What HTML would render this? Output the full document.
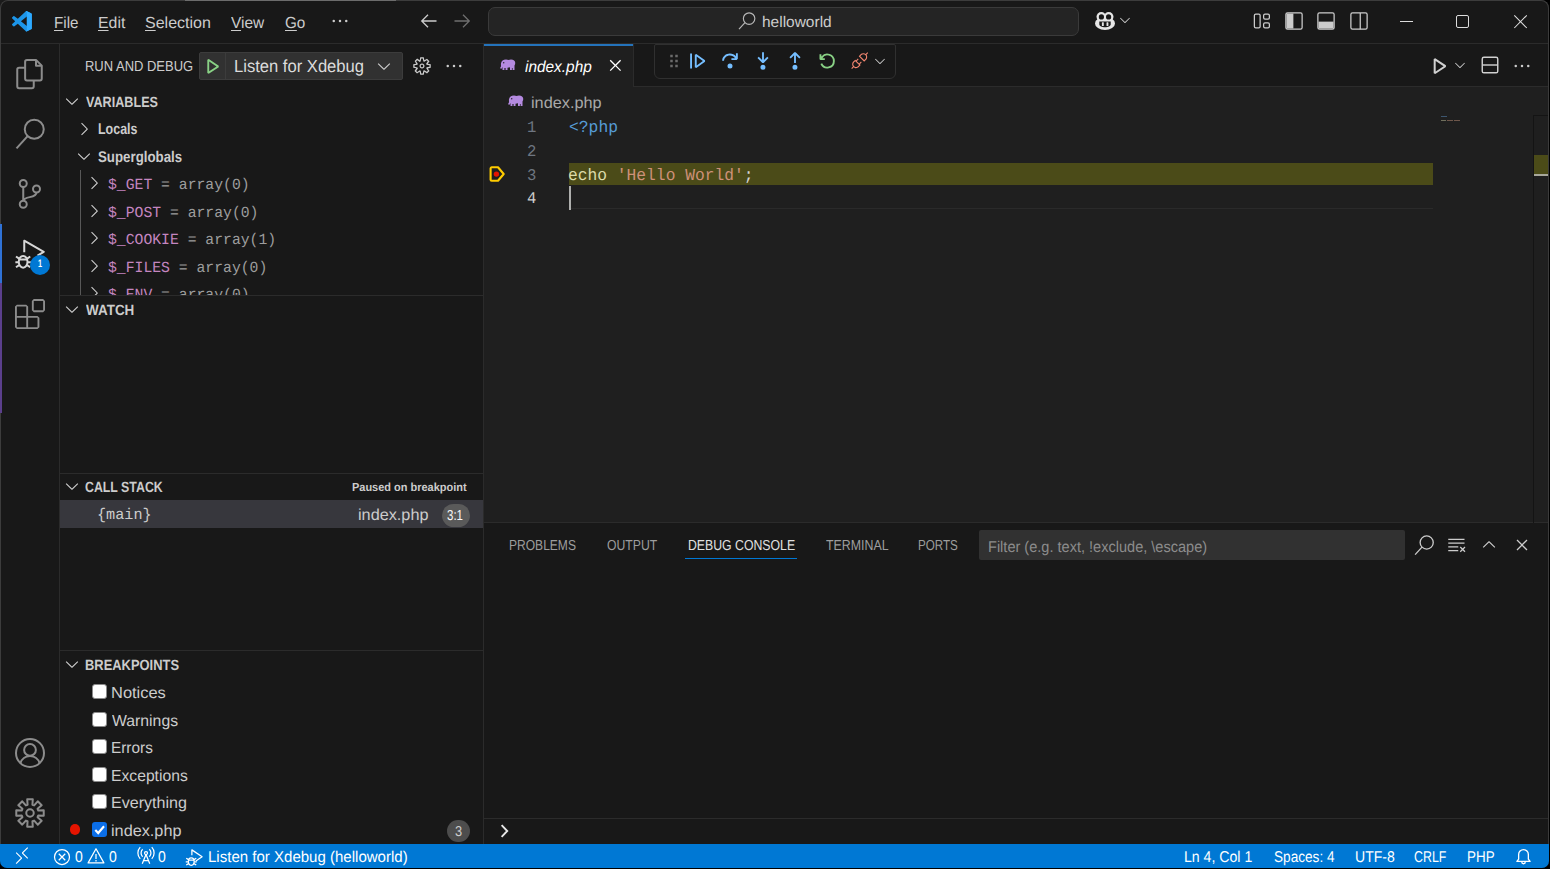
<!DOCTYPE html><html><head><meta charset="utf-8"><title>index.php - helloworld - Visual Studio Code</title><style>
html,body{margin:0;padding:0;background:#000;}
body{width:1550px;height:869px;overflow:hidden;position:relative;font-family:'Liberation Sans',sans-serif;}
#win{position:absolute;left:0;top:0;width:1549px;height:868px;background:#181818;border-radius:8px 8px 7px 7px;overflow:hidden;}
#w{position:absolute;left:0;top:0;width:1550px;height:869px;}
.b{position:absolute;box-sizing:border-box;}
.t{position:absolute;white-space:pre;line-height:1;text-rendering:geometricPrecision;transform-origin:0 0;}
.i{position:absolute;overflow:visible;}
u{text-decoration-thickness:1px;text-underline-offset:2px;}
</style></head><body><div class="b" style="left:0;top:0;width:9px;height:9px;background:#1b1b1b"></div><div id="win"><div id="w"><div class="b" style="left:0px;top:0px;width:1550px;height:44px;background:#181818;"></div><div class="b" style="left:0px;top:43px;width:1550px;height:1px;background:#2b2b2b;"></div><div class="b" style="left:0px;top:44px;width:60px;height:800px;background:#181818;"></div><div class="b" style="left:59px;top:44px;width:1px;height:800px;background:#2b2b2b;"></div><div class="b" style="left:60px;top:44px;width:424px;height:800px;background:#181818;"></div><div class="b" style="left:483px;top:44px;width:1px;height:800px;background:#2b2b2b;"></div><div class="b" style="left:484px;top:44px;width:1066px;height:43px;background:#181818;"></div><div class="b" style="left:484px;top:86px;width:1066px;height:1px;background:#2b2b2b;"></div><div class="b" style="left:484px;top:87px;width:1066px;height:436px;background:#1f1f1f;"></div><div class="b" style="left:484px;top:522px;width:1066px;height:1px;background:#2b2b2b;"></div><div class="b" style="left:484px;top:523px;width:1066px;height:321px;background:#181818;"></div><div class="b" style="left:0px;top:843.5px;width:1550px;height:26px;background:#0078d4;"></div><svg class="i" style="left:11.7px;top:10.5px" width="19.800" height="20.500" viewBox="0 0 100 100" preserveAspectRatio="none"><path d="M70.900 99.300a6.200 6.200 0 0 0 4.960-.19l20.590-9.910A6.250 6.250 0 0 0 100 83.590V16.410a6.250 6.250 0 0 0-3.540-5.630L75.870.870a6.230 6.230 0 0 0-7.100 1.210L29.360 38.040 12.190 25.010a4.160 4.160 0 0 0-5.320.24L1.360 30.260a4.170 4.170 0 0 0 0 6.160L16.250 50 1.360 63.580a4.170 4.170 0 0 0 0 6.160l5.510 5.010a4.160 4.160 0 0 0 5.320.24l17.170-13.030 39.420 35.960a6.200 6.200 0 0 0 2.120 1.380zM75 27.300L45.110 50 75 72.700z" fill="#1c95e8" fill-rule="evenodd"/><path d="M75.870.870a6.230 6.230 0 0 0-5 0 6.200 6.200 0 0 0-2.100 1.200l6.200 4.500v86.800l-6.200 4.500a6.200 6.200 0 0 0 7.090 1.240l20.590-9.910A6.250 6.250 0 0 0 100 83.590V16.410a6.250 6.250 0 0 0-3.540-5.630z" fill="#2eaaff"/><path d="M1.360 30.260l5.510-5.010a4.160 4.160 0 0 1 5.320-.24l63.680 48.300v25.800a6.200 6.200 0 0 1-7.100-1.210L1.360 36.420a4.170 4.170 0 0 1 0-6.160z" fill="#0065a9" opacity=".0"/></svg><span class="t" style="left:53.66px;top:16.02px;font-size:16.0px;color:#cccccc;transform:scaleX(0.9471);"><u>F</u>ile</span><span class="t" style="left:97.60px;top:16.02px;font-size:16.0px;color:#cccccc;transform:scaleX(0.9905);"><u>E</u>dit</span><span class="t" style="left:145.27px;top:16.02px;font-size:16.0px;color:#cccccc;transform:scaleX(1.0021);"><u>S</u>election</span><span class="t" style="left:231.03px;top:16.02px;font-size:16.0px;color:#cccccc;transform:scaleX(0.9663);"><u>V</u>iew</span><span class="t" style="left:285.03px;top:16.02px;font-size:16.0px;color:#cccccc;transform:scaleX(0.9513);"><u>G</u>o</span><svg class="i" style="left:329.5px;top:10.5px;color:#ccc;" width="20" height="20" viewBox="0 0 16 16"><path fill="currentColor" d="M4 8a1 1 0 1 1-2 0 1 1 0 0 1 2 0zm5 0a1 1 0 1 1-2 0 1 1 0 0 1 2 0zm5 0a1 1 0 1 1-2 0 1 1 0 0 1 2 0z"/></svg><svg class="i" style="left:418.8px;top:11.2px;color:#ccc;" width="20" height="20" viewBox="0 0 16 16"><g fill="none" stroke="currentColor" stroke-width="1.05"><path d="M14 8H2.2M7.2 3L2.2 8l5 5"/></g></svg><svg class="i" style="left:451.8px;top:11.2px;color:#6f6f6f;" width="20" height="20" viewBox="0 0 16 16"><g fill="none" stroke="currentColor" stroke-width="1.05"><path d="M2 8h11.8M8.8 3l5 5-5 5"/></g></svg><div class="b" style="left:488px;top:7px;width:591px;height:29px;background:#242424;border:1px solid #3a3a3a;border-radius:7px;"></div><svg class="i" style="left:738.3px;top:11.8px;color:#b8b8b8;" width="17.5" height="17.5" viewBox="0 0 16 16"><g fill="none" stroke="currentColor" stroke-width="1.05"><circle cx="10.150" cy="6" r="5.250"/><path d="M6.400 9.700L0.900 15.700"/></g></svg><span class="t" style="left:762.13px;top:15.02px;font-size:15.4px;color:#cccccc;transform:scaleX(1.0054);">helloworld</span><svg class="i" style="left:1095px;top:11.8px" width="20" height="18" viewBox="0 0 20 18"><ellipse cx="10" cy="11.400" rx="10" ry="6.600" fill="#e6e6e6"/><circle cx="6.300" cy="4.800" r="4.800" fill="#e6e6e6"/><circle cx="13.700" cy="4.800" r="4.800" fill="#e6e6e6"/><circle cx="6.400" cy="4.900" r="2.600" fill="#181818"/><circle cx="13.600" cy="4.900" r="2.600" fill="#181818"/><path fill="#181818" d="M4.300 9.400h11.400v3.200c0 1.500-2.700 2.700-5.700 2.700s-5.700-1.200-5.700-2.700z"/><rect x="6.900" y="10.300" width="1.900" height="3.800" rx=".5" fill="#e6e6e6"/><rect x="11.500" y="10.300" width="1.900" height="3.800" rx=".5" fill="#e6e6e6"/></svg><svg class="i" style="left:1115.1px;top:10.1px;color:#ccc;transform:scale(.8);" width="20" height="20" viewBox="0 0 16 16"><path fill="currentColor" d="M7.976 10.072l4.357-4.357.62.618L8.284 11h-.618L3 6.333l.619-.618 4.357 4.357z"/></svg><svg class="i" style="left:1252px;top:11px;color:#ccc;" width="20" height="20" viewBox="0 0 16 16"><g fill="none" stroke="currentColor" stroke-width="1"><rect x="1.900" y="2.500" width="4.600" height="11" rx="1.100"/><rect x="9.300" y="2.500" width="4.600" height="4" rx="1.100"/><rect x="9.300" y="9.500" width="4.600" height="4" rx="1.100"/></g></svg><svg class="i" style="left:1284px;top:11px;color:#ccc;" width="20" height="20" viewBox="0 0 16 16"><rect x="1.5" y="1.5" width="13" height="13" rx="1.3" fill="none" stroke="currentColor"/><path fill="currentColor" d="M2 2h5.5v12H2z"/></svg><svg class="i" style="left:1316.3px;top:11px;color:#ccc;" width="20" height="20" viewBox="0 0 16 16"><rect x="1.5" y="1.5" width="13" height="13" rx="1.3" fill="none" stroke="currentColor"/><path fill="currentColor" d="M2 8.5h12V14H2z"/></svg><svg class="i" style="left:1349px;top:11px;color:#ccc;" width="20" height="20" viewBox="0 0 16 16"><g fill="none" stroke="currentColor" stroke-width="1"><rect x="1.5" y="1.5" width="13" height="13" rx="1.3"/><path d="M9 1.500v13"/></g></svg><div class="b" style="left:1400px;top:21px;width:13.2px;height:1px;background:#dcdcdc;"></div><div class="b" style="left:1456px;top:15px;width:13.2px;height:13.2px;border:1px solid #dcdcdc;border-radius:2px;"></div><svg class="i" style="left:1510px;top:11px" width="22" height="22" viewBox="0 0 22 22"><path d="M4.300 4.300l12.500 12.700M16.800 4.300L4.300 17" fill="none" stroke="#e0e0e0" stroke-width="1.050"/></svg><svg class="i" style="left:15px;top:59px;color:#8c8c8c" width="30" height="30" viewBox="0 0 24 24"><g fill="none" stroke="currentColor" stroke-width="1.6" stroke-linejoin="round"><path d="M8.100 15.600V2.200a1.500 1.500 0 0 1 1.500-1.500h7.200l4.600 4.600v10.300a1.500 1.500 0 0 1-1.500 1.500H9.600a1.500 1.500 0 0 1-1.500-1.500z"/><path d="M16.800 .700v4.600h4.600"/><path d="M8.100 6.900H3.300a1.500 1.500 0 0 0-1.500 1.500v13.400a1.500 1.500 0 0 0 1.500 1.500h10.200a1.500 1.500 0 0 0 1.500-1.500V17.100"/></g></svg><svg class="i" style="left:15px;top:119px;color:#8c8c8c" width="30" height="30" viewBox="0 0 24 24"><g fill="none" stroke="currentColor" stroke-width="1.6" stroke-linejoin="round"><circle cx="15.400" cy="8.200" r="7.600"/><path d="M10.100 13.700L1.200 23.500"/></g></svg><svg class="i" style="left:15px;top:179px;color:#8c8c8c" width="30" height="30" viewBox="0 0 24 24"><g fill="none" stroke="currentColor" stroke-width="1.6" stroke-linejoin="round"><circle cx="6.600" cy="3.600" r="2.800"/><circle cx="6.600" cy="20.200" r="2.800"/><circle cx="17.200" cy="8" r="2.800"/><path d="M6.600 6.400V17.400M17.200 10.800C17.200 15.600 7.600 13.400 6.700 17.300"/></g></svg><svg class="i" style="left:15px;top:239px;color:#d7d7d7" width="30" height="30" viewBox="0 0 24 24"><g fill="none" stroke="currentColor" stroke-width="1.6" stroke-linejoin="round"><path d="M7.400 10.600V1.300l15.600 9-5 3" /><ellipse cx="6.500" cy="18.200" rx="3.500" ry="4.700"/><path d="M3.200 16.400h6.600M.800 14l2.500 1.700M.800 22.600l2.500-1.700M.3 18.500h2.700M12.200 14l-2.500 1.700M12.200 22.600l-2.500-1.700M12.700 18.500h-2.700"/></g></svg><svg class="i" style="left:15px;top:299px;color:#8c8c8c" width="30" height="30" viewBox="0 0 24 24"><path fill="currentColor" fill-rule="evenodd" d="M13.500 1.500L15 0h7.500L24 1.500V9l-1.500 1.500H15L13.500 9V1.500zm1.500 0V9h7.500V1.500H15zM0 15V6l1.500-1.500H9L10.500 6v7.500H18l1.500 1.500v7.500L18 24H1.500L0 22.500V15zm9-1.500V6H1.500v7.500H9zM9 15H1.500v7.500H9V15zm1.500 7.500H18V15h-7.500v7.500z"/></svg><svg class="i" style="left:15px;top:738px;color:#8c8c8c" width="30" height="30" viewBox="0 0 24 24"><g fill="none" stroke="currentColor" stroke-width="1.6" stroke-linejoin="round"><circle cx="12" cy="12" r="11.200"/><circle cx="12" cy="9.500" r="4.700"/><path d="M4.300 20.300A8 8 0 0 1 19.700 20.300"/></g></svg><svg class="i" style="left:15px;top:798px;color:#8c8c8c" width="30" height="30" viewBox="0 0 24 24"><g fill="none" stroke="currentColor" stroke-width="1.6" stroke-linejoin="round"><path d="M9.77 1.02L14.23 1.02L13.94 5.38L15.31 5.95L18.19 2.66L21.34 5.81L18.05 8.69L18.62 10.06L22.98 9.77L22.98 14.23L18.62 13.94L18.05 15.31L21.34 18.19L18.19 21.34L15.31 18.05L13.94 18.62L14.23 22.98L9.77 22.98L10.06 18.62L8.69 18.05L5.81 21.34L2.66 18.19L5.95 15.31L5.38 13.94L1.02 14.23L1.02 9.77L5.38 10.06L5.95 8.69L2.66 5.81L5.81 2.66L8.69 5.95L10.06 5.38z"/><circle cx="12" cy="12" r="3"/></g></svg><div class="b" style="left:30px;top:254.5px;width:20px;height:20px;background:#0078d4;border-radius:10px;"></div><span class="t" style="left:37.84px;top:259.02px;font-size:10.8px;color:#fff;font-weight:700;transform:scaleX(0.6753);">1</span><span class="t" style="left:85.14px;top:60.02px;font-size:14.5px;color:#cccccc;transform:scaleX(0.8947);">RUN AND DEBUG</span><div class="b" style="left:199px;top:52px;width:204px;height:28px;background:#313131;border:1px solid #3c3c3c;border-radius:2px;"></div><div class="b" style="left:225px;top:53px;width:1px;height:26px;background:#3c3c3c;"></div><svg class="i" style="left:201.9px;top:55.6px;color:#89d185;" width="20" height="20" viewBox="0 0 16 16"><path fill="currentColor" d="M4.25 3l1.166-.624 8 5.333v1.248l-8 5.334-1.166-.624V3zm1.5 1.401v7.864l5.898-3.932L5.75 4.401z"/></svg><span class="t" style="left:233.54px;top:58.02px;font-size:17.5px;color:#dcdcdc;transform:scaleX(0.9478);">Listen for Xdebug</span><svg class="i" style="left:374.4px;top:55.5px;color:#ccc;" width="20" height="20" viewBox="0 0 16 16"><path fill="currentColor" d="M7.976 10.072l4.357-4.357.62.618L8.284 11h-.618L3 6.333l.619-.618 4.357 4.357z"/></svg><svg class="i" style="left:411.5px;top:56px;color:#ccc;" width="20" height="20" viewBox="0 0 16 16"><path fill="currentColor" d="M9.1 4.4L8.6 2H7.4l-.5 2.4-.7.3-2-1.3-.9.8 1.3 2-.2.7-2.4.5v1.2l2.4.5.3.8-1.3 2 .8.8 2-1.3.8.3.4 2.3h1.2l.5-2.4.8-.3 2 1.3.8-.8-1.3-2 .3-.8 2.3-.4V7.4l-2.4-.5-.3-.8 1.3-2-.8-.8-2 1.3-.7-.2zM9.4 1l.5 2.4L12 2.1l2 2-1.4 2.1 2.4.4v2.8l-2.4.5L14 12l-2 2-2.1-1.4-.5 2.4H6.6l-.5-2.4L4 13.900l-2-2 1.400-2.100L1 9.400V6.600l2.400-.5L2.100 4l2-2 2.100 1.400.4-2.400h2.800zm.6 7c0 1.100-.9 2-2 2s-2-.9-2-2 .9-2 2-2 2 .9 2 2zM8 9c.6 0 1-.4 1-1s-.4-1-1-1-1 .4-1 1 .4 1 1 1z"/></svg><svg class="i" style="left:444px;top:56px;color:#ccc;" width="20" height="20" viewBox="0 0 16 16"><path fill="currentColor" d="M4 8a1 1 0 1 1-2 0 1 1 0 0 1 2 0zm5 0a1 1 0 1 1-2 0 1 1 0 0 1 2 0zm5 0a1 1 0 1 1-2 0 1 1 0 0 1 2 0z"/></svg><svg class="i" style="left:62.3px;top:91.1px;color:#ccc;" width="20" height="20" viewBox="0 0 16 16"><path fill="currentColor" d="M7.976 10.072l4.357-4.357.62.618L8.284 11h-.618L3 6.333l.619-.618 4.357 4.357z"/></svg><span class="t" style="left:85.71px;top:96.02px;font-size:14.8px;color:#cccccc;font-weight:700;transform:scaleX(0.8528);">VARIABLES</span><svg class="i" style="left:74.2px;top:119px;color:#ccc;" width="20" height="20" viewBox="0 0 16 16"><path fill="currentColor" d="M10.072 8.024L5.715 3.667l.618-.62L11 7.716v.618L6.333 13l-.618-.619 4.357-4.357z"/></svg><span class="t" style="left:97.87px;top:122.02px;font-size:15.5px;color:#cccccc;font-weight:700;transform:scaleX(0.8032);">Locals</span><svg class="i" style="left:74.4px;top:145.7px;color:#ccc;" width="20" height="20" viewBox="0 0 16 16"><path fill="currentColor" d="M7.976 10.072l4.357-4.357.62.618L8.284 11h-.618L3 6.333l.619-.618 4.357 4.357z"/></svg><span class="t" style="left:98.22px;top:150.02px;font-size:15.5px;color:#cccccc;font-weight:700;transform:scaleX(0.8568);">Superglobals</span><div class="b" style="left:80px;top:170px;width:1px;height:126px;background:#585858;"></div><div class="b" style="left:60px;top:170px;width:423px;height:125px;overflow:hidden"><svg class="i" style="left:24px;top:3.4000000000000004px;color:#ccc;" width="20" height="20" viewBox="0 0 16 16"><path fill="currentColor" d="M10.072 8.024L5.715 3.667l.618-.62L11 7.716v.618L6.333 13l-.618-.619 4.357-4.357z"/></svg><span class="t" style="left:47.72px;top:8.02px;font-size:15.4px;color:#9d9d9d;font-family:'Liberation Mono',monospace;transform:scaleX(0.9580);"><span style="color:#c586c0">$_GET</span> = array(0)</span><svg class="i" style="left:24px;top:31.4px;color:#ccc;" width="20" height="20" viewBox="0 0 16 16"><path fill="currentColor" d="M10.072 8.024L5.715 3.667l.618-.62L11 7.716v.618L6.333 13l-.618-.619 4.357-4.357z"/></svg><span class="t" style="left:47.72px;top:36.02px;font-size:15.4px;color:#9d9d9d;font-family:'Liberation Mono',monospace;transform:scaleX(0.9580);"><span style="color:#c586c0">$_POST</span> = array(0)</span><svg class="i" style="left:24px;top:58.4px;color:#ccc;" width="20" height="20" viewBox="0 0 16 16"><path fill="currentColor" d="M10.072 8.024L5.715 3.667l.618-.62L11 7.716v.618L6.333 13l-.618-.619 4.357-4.357z"/></svg><span class="t" style="left:47.72px;top:63.02px;font-size:15.4px;color:#9d9d9d;font-family:'Liberation Mono',monospace;transform:scaleX(0.9580);"><span style="color:#c586c0">$_COOKIE</span> = array(1)</span><svg class="i" style="left:24px;top:86.4px;color:#ccc;" width="20" height="20" viewBox="0 0 16 16"><path fill="currentColor" d="M10.072 8.024L5.715 3.667l.618-.62L11 7.716v.618L6.333 13l-.618-.619 4.357-4.357z"/></svg><span class="t" style="left:47.72px;top:91.02px;font-size:15.4px;color:#9d9d9d;font-family:'Liberation Mono',monospace;transform:scaleX(0.9580);"><span style="color:#c586c0">$_FILES</span> = array(0)</span><svg class="i" style="left:24px;top:113.4px;color:#ccc;" width="20" height="20" viewBox="0 0 16 16"><path fill="currentColor" d="M10.072 8.024L5.715 3.667l.618-.62L11 7.716v.618L6.333 13l-.618-.619 4.357-4.357z"/></svg><span class="t" style="left:47.72px;top:118.02px;font-size:15.4px;color:#9d9d9d;font-family:'Liberation Mono',monospace;transform:scaleX(0.9580);"><span style="color:#c586c0">$_ENV</span> = array(0)</span></div><div class="b" style="left:60px;top:295px;width:423px;height:1px;background:#2b2b2b;"></div><svg class="i" style="left:62.3px;top:299.1px;color:#ccc;" width="20" height="20" viewBox="0 0 16 16"><path fill="currentColor" d="M7.976 10.072l4.357-4.357.62.618L8.284 11h-.618L3 6.333l.619-.618 4.357 4.357z"/></svg><span class="t" style="left:85.79px;top:304.02px;font-size:14.8px;color:#cccccc;font-weight:700;transform:scaleX(0.9090);">WATCH</span><div class="b" style="left:60px;top:473px;width:423px;height:1px;background:#2b2b2b;"></div><svg class="i" style="left:62.3px;top:476.1px;color:#ccc;" width="20" height="20" viewBox="0 0 16 16"><path fill="currentColor" d="M7.976 10.072l4.357-4.357.62.618L8.284 11h-.618L3 6.333l.619-.618 4.357 4.357z"/></svg><span class="t" style="left:85.29px;top:481.02px;font-size:14.8px;color:#cccccc;font-weight:700;transform:scaleX(0.8342);">CALL STACK</span><span class="t" style="left:352.27px;top:482.02px;font-size:11.6px;color:#cccccc;font-weight:700;transform:scaleX(0.9459);">Paused on breakpoint</span><div class="b" style="left:60px;top:500px;width:423px;height:28px;background:#37373d;"></div><span class="t" style="left:96.92px;top:508.02px;font-size:15.4px;color:#cccccc;font-family:'Liberation Mono',monospace;transform:scaleX(0.9850);">{main}</span><span class="t" style="left:358.01px;top:508.02px;font-size:16.0px;color:#cccccc;transform:scaleX(1.0155);">index.php</span><div class="b" style="left:442px;top:504px;width:28px;height:23px;background:#5a5a5a;border-radius:11.5px;"></div><span class="t" style="left:447.16px;top:509.02px;font-size:14.5px;color:#f8f8f8;transform:scaleX(0.7932);">3:1</span><div class="b" style="left:60px;top:650px;width:423px;height:1px;background:#2b2b2b;"></div><svg class="i" style="left:62.3px;top:654.1px;color:#ccc;" width="20" height="20" viewBox="0 0 16 16"><path fill="currentColor" d="M7.976 10.072l4.357-4.357.62.618L8.284 11h-.618L3 6.333l.619-.618 4.357 4.357z"/></svg><span class="t" style="left:84.94px;top:659.02px;font-size:14.8px;color:#cccccc;font-weight:700;transform:scaleX(0.8734);">BREAKPOINTS</span><div class="b" style="left:92.0px;top:684.2px;width:14.5px;height:14.5px;background:#ffffff;border:1px solid #8a8a8a;border-radius:3px;"></div><span class="t" style="left:110.85px;top:686.02px;font-size:16.0px;color:#cccccc;transform:scaleX(1.0278);">Notices</span><div class="b" style="left:92.0px;top:712.2px;width:14.5px;height:14.5px;background:#ffffff;border:1px solid #8a8a8a;border-radius:3px;"></div><span class="t" style="left:112.13px;top:714.02px;font-size:16.0px;color:#cccccc;transform:scaleX(0.9859);">Warnings</span><div class="b" style="left:92.0px;top:739.2px;width:14.5px;height:14.5px;background:#ffffff;border:1px solid #8a8a8a;border-radius:3px;"></div><span class="t" style="left:110.94px;top:741.02px;font-size:16.0px;color:#cccccc;transform:scaleX(0.9599);">Errors</span><div class="b" style="left:92.0px;top:767.2px;width:14.5px;height:14.5px;background:#ffffff;border:1px solid #8a8a8a;border-radius:3px;"></div><span class="t" style="left:110.91px;top:769.02px;font-size:16.0px;color:#cccccc;transform:scaleX(0.9807);">Exceptions</span><div class="b" style="left:92.0px;top:794.2px;width:14.5px;height:14.5px;background:#ffffff;border:1px solid #8a8a8a;border-radius:3px;"></div><span class="t" style="left:110.88px;top:796.02px;font-size:16.0px;color:#cccccc;transform:scaleX(1.0048);">Everything</span><div class="b" style="left:91.5px;top:821.5px;width:15.5px;height:15.5px;background:#0b6ee8;border-radius:3px;"></div><svg class="i" style="left:91.5px;top:821.5px" width="15.5" height="15.5" viewBox="0 0 16 16"><path d="M3.400 8.300l3 3.100 6-7" fill="none" stroke="#fff" stroke-width="2.200"/></svg><span class="t" style="left:111.11px;top:824.02px;font-size:16.0px;color:#cccccc;transform:scaleX(1.0155);">index.php</span><div class="b" style="left:69.5px;top:823.8px;width:10.8px;height:10.8px;background:#e51400;border-radius:50%;"></div><div class="b" style="left:447px;top:819.5px;width:22.5px;height:22.5px;background:#4d4d4d;border-radius:50%;"></div><span class="t" style="left:454.91px;top:825.02px;font-size:14.3px;color:#cccccc;transform:scaleX(0.8997);">3</span><div class="b" style="left:484px;top:44px;width:150px;height:43px;background:#1f1f1f;"></div><div class="b" style="left:484px;top:44px;width:149px;height:1.5px;background:#2473bb;"></div><div class="b" style="left:633px;top:44px;width:1px;height:43px;background:#2b2b2b;"></div><svg class="i" style="left:500.4px;top:58.9px" width="16" height="11.52" viewBox="0 0 32 23"><path fill="#b48ae0" d="M12 1C6.500 1 2.500 4 2 8.500c-.3 2 0 3.500 0 5.500 0 1.500-1 2-1.500 3.500-.3 1 .5 2 1.500 2 2 0 2.500-2 2.500-3.500l.5.500V22h3.800v-4h2.400v4H15v-4.500c1.800 0 3.500-.3 5-.8V22h3.800v-4h1.400v4H29v-9c1-1.500 1.500-3 1.500-5 0-4-3.500-7-8.500-7-2 0-3.500.4-5 1.200C15.800 1.400 14 1 12 1z"/><circle cx="7.500" cy="7.500" r="1.300" fill="#181818"/></svg><span class="t" style="left:524.65px;top:60.02px;font-size:16.0px;color:#ffffff;font-style:italic;transform:scaleX(0.9619);">index.php</span><svg class="i" style="left:605.1px;top:55.2px;color:#fff;" width="20.8" height="20.8" viewBox="0 0 16 16"><path fill="currentColor" d="M8 8.707l3.646 3.647.708-.707L8.707 8l3.647-3.646-.707-.708L8 7.293 4.354 3.646l-.707.708L7.293 8l-3.646 3.646.707.708L8 8.707z"/></svg><div class="b" style="left:654px;top:44px;width:242px;height:35px;background:#181818;border:1px solid #303030;border-radius:2px 2px 6px 6px;"></div><svg class="i" style="left:664px;top:51px;color:#6b6b6b;" width="20" height="20" viewBox="0 0 16 16"><path fill="currentColor" d="M5 3h2v2H5zm0 4h2v2H5zm0 4h2v2H5zm4-8h2v2H9zm0 4h2v2H9zm0 4h2v2H9z"/></svg><svg class="i" style="left:687.2px;top:51px;color:#75beff;" width="20" height="20" viewBox="0 0 16 16"><path fill="currentColor" d="M2.5 2H4v12H2.5V2zm4.936.39L6.25 3v10l1.186.61 7-5V7.39l-7-5zM12.71 8l-4.96 3.543V4.457L12.71 8z"/></svg><svg class="i" style="left:719.6px;top:51px;color:#75beff;" width="20" height="20" viewBox="0 0 16 16"><path fill="currentColor" d="M14.25 5.75v-4h-1.5v2.542c-1.145-1.359-2.911-2.209-4.84-2.209-3.177 0-5.92 2.307-6.16 5.398l-.02.269h1.501l.022-.226c.212-2.195 2.202-3.94 4.656-3.94 1.736 0 3.244.875 4.05 2.166h-2.83v1.5h4.163l.962-.975V5.75h-.004zM8 14a2 2 0 1 0 0-4 2 2 0 0 0 0 4z"/></svg><svg class="i" style="left:752.5px;top:51px;color:#75beff;" width="20" height="20" viewBox="0 0 16 16"><path fill="currentColor" d="M8 9.532h.542l3.905-3.905-1.061-1.06-2.637 2.61V1H7.251v6.177l-2.637-2.61-1.061 1.06 3.905 3.905H8zm1.956 3.481a2 2 0 1 1-4 0 2 2 0 0 1 4 0z"/></svg><svg class="i" style="left:784.8px;top:51px;color:#75beff;" width="20" height="20" viewBox="0 0 16 16"><path fill="currentColor" d="M8 1h-.542L3.553 4.905l1.061 1.06 2.637-2.61v6.177h1.498V3.355l2.637 2.61 1.061-1.06L8.542 1H8zm1.956 12.013a2 2 0 1 1-4 0 2 2 0 0 1 4 0z"/></svg><svg class="i" style="left:817px;top:51px;color:#89d185;" width="20" height="20" viewBox="0 0 16 16"><path fill="currentColor" d="M12.75 8a4.5 4.5 0 0 1-8.61 1.834l-1.391.565A6.001 6.001 0 0 0 14.25 8 6 6 0 0 0 3.5 4.334V2.5H2v4l.75.75h3.5v-1.5H4.352A4.5 4.5 0 0 1 12.75 8z"/></svg><svg class="i" style="left:849.5px;top:51px;color:#f48771;" width="20" height="20" viewBox="0 0 16 16"><path fill="currentColor" d="M13.617 3.844a2.87 2.87 0 0 0-.451-.868l1.354-1.36L13.904 1l-1.36 1.354a2.877 2.877 0 0 0-.868-.452 3.073 3.073 0 0 0-2.14.075 3.03 3.03 0 0 0-.991.664L7 4.192l4.327 4.328 1.552-1.545c.287-.287.508-.618.663-.992a3.074 3.074 0 0 0 .075-2.14zm-.889 1.804a2.15 2.15 0 0 1-.471.705l-.93.93-3.09-3.09.93-.93a2.15 2.15 0 0 1 .704-.472 2.134 2.134 0 0 1 1.689.007c.264.114.494.271.69.472.2.195.358.426.472.69a2.134 2.134 0 0 1 .007 1.688zm-4.824 4.994l1.484-1.545-.616-.622-1.49 1.551-1.86-1.859 1.491-1.552L6.291 6 4.808 7.545l-.616-.615-1.551 1.545a3 3 0 0 0-.663.998 3.023 3.023 0 0 0-.233 1.169c0 .332.05.656.15.97.105.31.258.597.459.862L1 13.834l.615.615 1.36-1.353c.265.2.552.353.862.458.314.1.638.15.97.15.406 0 .796-.077 1.17-.232.378-.155.71-.376.998-.663l1.545-1.552-.616-.615zm-2.262 2.023a2.16 2.16 0 0 1-.834.164c-.301 0-.586-.057-.855-.17a2.278 2.278 0 0 1-.697-.466 2.28 2.28 0 0 1-.465-.697 2.167 2.167 0 0 1-.17-.854 2.16 2.16 0 0 1 .642-1.545l.93-.93 3.09 3.09-.93.93a2.22 2.22 0 0 1-.711.478z"/></svg><svg class="i" style="left:870px;top:51px;color:#ccc;transform:scale(.8);" width="20" height="20" viewBox="0 0 16 16"><path fill="currentColor" d="M7.976 10.072l4.357-4.357.62.618L8.284 11h-.618L3 6.333l.619-.618 4.357 4.357z"/></svg><svg class="i" style="left:1428.3px;top:54.9px;color:#d0d0d0;" width="21.4" height="21.4" viewBox="0 0 16 16"><path fill="currentColor" d="M4.25 3l1.166-.624 8 5.333v1.248l-8 5.334-1.166-.624V3zm1.5 1.401v7.864l5.898-3.932L5.75 4.401z"/></svg><svg class="i" style="left:1449.8px;top:55px;color:#ccc;transform:scale(.8);" width="20" height="20" viewBox="0 0 16 16"><path fill="currentColor" d="M7.976 10.072l4.357-4.357.62.618L8.284 11h-.618L3 6.333l.619-.618 4.357 4.357z"/></svg><svg class="i" style="left:1480px;top:55.3px;color:#d0d0d0;" width="20" height="20" viewBox="0 0 16 16"><g fill="none" stroke="currentColor" stroke-width="1.15"><rect x="1.800" y="1.800" width="12.400" height="12.400" rx="1.300"/><path d="M1.800 8h12.400"/></g></svg><svg class="i" style="left:1511.5px;top:56px;color:#ccc;" width="20" height="20" viewBox="0 0 16 16"><path fill="currentColor" d="M4 8a1 1 0 1 1-2 0 1 1 0 0 1 2 0zm5 0a1 1 0 1 1-2 0 1 1 0 0 1 2 0zm5 0a1 1 0 1 1-2 0 1 1 0 0 1 2 0z"/></svg><svg class="i" style="left:507.9px;top:95.3px" width="16" height="11.52" viewBox="0 0 32 23"><path fill="#b48ae0" d="M12 1C6.500 1 2.500 4 2 8.500c-.3 2 0 3.500 0 5.500 0 1.500-1 2-1.500 3.500-.3 1 .5 2 1.500 2 2 0 2.500-2 2.500-3.500l.5.500V22h3.800v-4h2.400v4H15v-4.500c1.800 0 3.500-.3 5-.8V22h3.800v-4h1.400v4H29v-9c1-1.500 1.500-3 1.500-5 0-4-3.500-7-8.500-7-2 0-3.500.4-5 1.200C15.800 1.400 14 1 12 1z"/><circle cx="7.500" cy="7.500" r="1.300" fill="#181818"/></svg><span class="t" style="left:531.11px;top:96.02px;font-size:16.0px;color:#a9a9a9;transform:scaleX(1.0170);">index.php</span><div class="b" style="left:569px;top:163px;width:864px;height:22.4px;background:#4b4b18;"></div><div class="b" style="left:569px;top:207.9px;width:864px;height:1.6px;background:#2a2a2a;"></div><div class="b" style="left:569px;top:186px;width:1.8px;height:23.8px;background:#aeafad;"></div><span class="t" style="left:527.00px;top:120.02px;font-size:16.3px;color:#6e7681;font-family:'Liberation Mono',monospace;transform:scaleX(0.9580);">1</span><span class="t" style="left:527.00px;top:144.02px;font-size:16.3px;color:#6e7681;font-family:'Liberation Mono',monospace;transform:scaleX(0.9580);">2</span><span class="t" style="left:527.00px;top:168.02px;font-size:16.3px;color:#6e7681;font-family:'Liberation Mono',monospace;transform:scaleX(0.9580);">3</span><span class="t" style="left:527.00px;top:191.02px;font-size:16.3px;color:#ccc;font-family:'Liberation Mono',monospace;transform:scaleX(0.9580);">4</span><span class="t" style="left:568.87px;top:121.02px;font-size:16.7px;color:#569cd6;font-family:'Liberation Mono',monospace;transform:scaleX(0.9792);">&lt;?php</span><span class="t" style="left:568.44px;top:169.02px;font-size:16.7px;color:#d4d4d4;font-family:'Liberation Mono',monospace;transform:scaleX(0.9748);"><span style="color:#dcdcaa">echo</span> <span style="color:#ce9178">&#39;Hello World&#39;</span>;</span><svg class="i" style="left:488px;top:164px" width="20" height="20" viewBox="0 0 20 20"><path d="M3.700 3.300H10L15.700 10.050 10 16.800H3.700a1.100 1.100 0 0 1-1.100-1.100V4.400a1.100 1.100 0 0 1 1.100-1.100z" fill="none" stroke="#ffcc00" stroke-width="2.100" stroke-linejoin="round"/><circle cx="8.400" cy="10.100" r="2.700" fill="#e51400"/></svg><div class="b" style="left:1441px;top:115.6px;width:6px;height:1.2px;background:#3d566f;"></div><div class="b" style="left:1441px;top:119.8px;width:4.5px;height:1.3px;background:#6f6f5c;"></div><div class="b" style="left:1446.5px;top:119.8px;width:6.5px;height:1.3px;background:#6e574b;"></div><div class="b" style="left:1454px;top:119.8px;width:6px;height:1.3px;background:#6e574b;"></div><div class="b" style="left:1533px;top:115.5px;width:1px;height:407px;background:#141414;"></div><div class="b" style="left:1533px;top:115px;width:17px;height:1px;background:#141414;"></div><div class="b" style="left:1534px;top:155px;width:15px;height:19px;background:#4b4b18;"></div><div class="b" style="left:1534px;top:174px;width:15px;height:2.2px;background:#a8a89c;"></div><span class="t" style="left:508.91px;top:539.02px;font-size:14.5px;color:#9d9d9d;transform:scaleX(0.8306);">PROBLEMS</span><span class="t" style="left:606.52px;top:539.02px;font-size:14.5px;color:#9d9d9d;transform:scaleX(0.8431);">OUTPUT</span><span class="t" style="left:687.59px;top:539.02px;font-size:14.5px;color:#e0e0e0;transform:scaleX(0.8469);">DEBUG CONSOLE</span><span class="t" style="left:825.52px;top:539.02px;font-size:14.5px;color:#9d9d9d;transform:scaleX(0.8535);">TERMINAL</span><span class="t" style="left:918.35px;top:539.02px;font-size:14.5px;color:#9d9d9d;transform:scaleX(0.8025);">PORTS</span><div class="b" style="left:684.8px;top:557.5px;width:112px;height:1.4px;background:#0078d4;"></div><div class="b" style="left:979px;top:530px;width:426px;height:29.5px;background:#313131;border-radius:2px;"></div><span class="t" style="left:987.81px;top:540.02px;font-size:15.6px;color:#8c8c8c;transform:scaleX(0.9328);">Filter (e.g. text, !exclude, \escape)</span><svg class="i" style="left:1414px;top:534.5px;color:#ccc;" width="20" height="20" viewBox="0 0 16 16"><g fill="none" stroke="currentColor" stroke-width="1.05"><circle cx="10.150" cy="6" r="5.250"/><path d="M6.400 9.700L0.900 15.700"/></g></svg><svg class="i" style="left:1446.9px;top:535px;color:#ccc;" width="20" height="20" viewBox="0 0 16 16"><path fill="currentColor" d="M1 3h13v1H1zm0 3h13v1H1zm0 3h8v1H1zm0 3h8v1H1z"/><path fill="none" stroke="currentColor" stroke-width="1" d="M10.6 9.6l3.8 3.8m0-3.8l-3.8 3.8"/></svg><svg class="i" style="left:1479px;top:535px;color:#ccc;" width="20" height="20" viewBox="0 0 16 16"><path fill="currentColor" d="M8.024 5.928l-4.357 4.357-.62-.618L7.716 5h.618L13 9.667l-.619.618-4.357-4.357z"/></svg><svg class="i" style="left:1511.5px;top:535px;color:#ccc;" width="20" height="20" viewBox="0 0 16 16"><path fill="currentColor" d="M8 8.707l3.646 3.647.708-.707L8.707 8l3.647-3.646-.707-.708L8 7.293 4.354 3.646l-.707.708L7.293 8l-3.646 3.646.707.708L8 8.707z"/></svg><div class="b" style="left:484px;top:817.5px;width:1066px;height:1px;background:#2b2b2b;"></div><svg class="i" style="left:494px;top:821px" width="20" height="20" viewBox="0 0 16 16"><path d="M6.100 3.300L10.600 8 6.100 12.700" fill="none" stroke="#e8e8e8" stroke-width="1.500"/></svg><svg class="i" style="left:11.5px;top:846px;color:#ffffff;" width="20" height="20" viewBox="0 0 16 16"><path fill="currentColor" d="M12.904 9.570L8.928 5.596l3.976-3.976-.619-.620L8 5.286v.619l4.285 4.285.619-.620zM3 5.620l4.072 4.050L3 13.740l.620.620 4.380-4.380v-.620L3.620 5 3 5.620z"/></svg><svg class="i" style="left:51.5px;top:846.5px;color:#ffffff;" width="20" height="20" viewBox="0 0 16 16"><g fill="none" stroke="currentColor" stroke-width="1"><circle cx="8" cy="8" r="6"/><path d="M5.400 5.400l5.200 5.200m0-5.200l-5.200 5.200"/></g></svg><span class="t" style="left:74.65px;top:850.02px;font-size:15.6px;color:#ffffff;transform:scaleX(0.8971);">0</span><svg class="i" style="left:85.8px;top:845.6px;color:#ffffff;" width="20" height="20" viewBox="0 0 16 16"><g fill="none" stroke="currentColor" stroke-width="1"><path d="M8 2.200L14.300 13.500H1.700z" stroke-linejoin="round"/><path d="M8 6.300v4"/><path d="M8 11.200v1.200"/></g></svg><span class="t" style="left:108.65px;top:850.02px;font-size:15.6px;color:#ffffff;transform:scaleX(0.8971);">0</span><svg class="i" style="left:135.8px;top:845.5px;color:#ffffff;" width="20" height="20" viewBox="0 0 16 16"><g fill="none" stroke="currentColor" stroke-width="1"><path d="M8 6.800L5 14.200M8 6.800l3 7.400M6.100 11.600h3.800"/><circle cx="8" cy="5.600" r="1.200"/><path d="M5.300 8.600a4.200 4.200 0 0 1 0-6M10.700 8.600a4.200 4.200 0 0 0 0-6M3.400 10.300a6.800 6.800 0 0 1 0-9.400M12.600 10.300a6.800 6.800 0 0 0 0-9.400"/></g></svg><span class="t" style="left:157.95px;top:850.02px;font-size:15.6px;color:#ffffff;transform:scaleX(0.8971);">0</span><svg class="i" style="left:184.5px;top:846.5px;color:#ffffff;" width="20" height="20" viewBox="0 0 16 16"><g fill="none" stroke="currentColor" stroke-width="1"><path d="M5.500 6.500V2.300l8.200 5.500-5 3.400" stroke-linejoin="round"/><ellipse cx="5" cy="11.600" rx="2.300" ry="3"/><path d="M2.700 10.500H7.300M1 9l1.800 1.100M1 14.400l1.800-1.100M.6 11.800h2.100M9 9l-1.800 1.100M9 14.400l-1.800-1.100M9.400 11.800h-2.100"/></g></svg><span class="t" style="left:207.87px;top:850.02px;font-size:15.6px;color:#ffffff;transform:scaleX(0.9638);">Listen for Xdebug (helloworld)</span><span class="t" style="left:1184.14px;top:850.02px;font-size:15.6px;color:#ffffff;transform:scaleX(0.9049);">Ln 4, Col 1</span><span class="t" style="left:1273.68px;top:850.02px;font-size:15.6px;color:#ffffff;transform:scaleX(0.8725);">Spaces: 4</span><span class="t" style="left:1354.52px;top:850.02px;font-size:15.6px;color:#ffffff;transform:scaleX(0.9006);">UTF-8</span><span class="t" style="left:1414.17px;top:850.02px;font-size:15.6px;color:#ffffff;transform:scaleX(0.7961);">CRLF</span><span class="t" style="left:1467.00px;top:850.02px;font-size:15.6px;color:#ffffff;transform:scaleX(0.8607);">PHP</span><svg class="i" style="left:1512.6px;top:844.5px;color:#ffffff;" width="21" height="21" viewBox="0 0 16 16"><g fill="none" stroke="currentColor" stroke-width="1"><path d="M3 12.500h10l-1.300-1.800V7.200a3.700 3.700 0 0 0-7.400 0v3.500z" stroke-linejoin="round"/><path d="M6.700 13a1.300 1.300 0 0 0 2.600 0"/></g></svg></div></div><div class="b" style="left:0;top:0;width:1549px;height:844px;border:1px solid #3c3c3c;border-radius:8px 8px 0 0;border-bottom:none"></div><div class="b" style="left:185px;top:0;width:211px;height:1px;background:#6c6c6c"></div><div class="b" style="left:0;top:224px;width:2px;height:59px;background:#2f72d6"></div><div class="b" style="left:0;top:283px;width:2px;height:130px;background:#5b3f8c"></div></body></html>
